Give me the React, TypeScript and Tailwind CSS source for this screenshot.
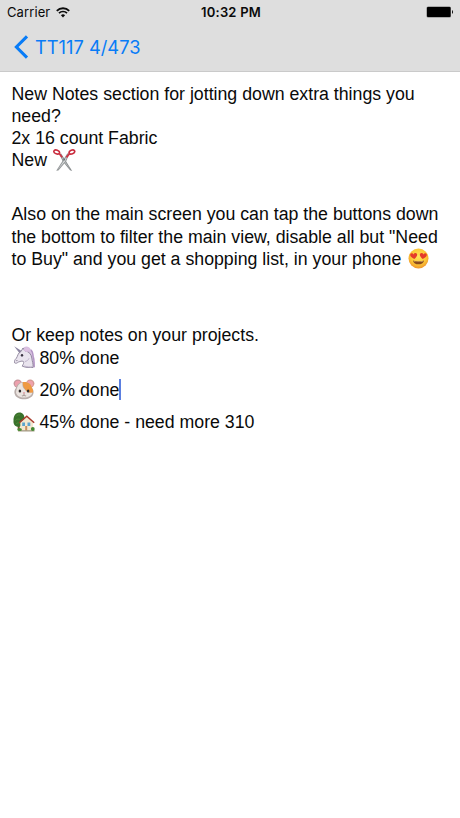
import type { ReactNode } from 'react'

function WifiIcon() {
  return (
    <svg width="14" height="11" viewBox="0 0 14 11" fill="none" className="ml-[6px]">
      <path d="M0.800 3.800a8.800 8.800 0 0 1 12.400 0" stroke="#0a0a0a" strokeWidth="1.900" />
      <path d="M3 6.200a5.600 5.600 0 0 1 8 0" stroke="#0a0a0a" strokeWidth="1.700" />
      <path d="M4.900 8.200a3 3 0 0 1 4.200 0L7 10.400z" fill="#0a0a0a" />
    </svg>
  )
}

function BatteryIcon() {
  return (
    <svg width="28" height="12" viewBox="0 0 28 12">
      <rect x="0.500" y="0.500" width="24.500" height="11" rx="1.600" fill="#777" />
      <rect x="1" y="1" width="23.500" height="10" rx="1" fill="#000" />
      <path d="M26 4.100c1.400.5 1.400 3.300 0 3.800z" fill="#111" />
    </svg>
  )
}

function BackIcon() {
  return (
    <svg width="15" height="24" viewBox="0 0 15 24" fill="none">
      <path d="M13 1.400 2.400 12 13 22.600" stroke="#087cf7" strokeWidth="3.100" />
    </svg>
  )
}

function Scissors() {
  return (
    <svg width="23" height="23" viewBox="0 0 23 23" className="ml-px shrink-0">
      <path d="M6.400 5.200 8.100 4.400 19.200 22 17 21.300 9.800 12.400z" fill="#85898b" />
      <path d="m7.200 5.200 10.300 15.600L10.600 12z" fill="#cfd3d3" />
      <path d="M16.200 5.200 14.400 4.300 3.200 21.800 5.400 21.400 13.100 12.500z" fill="#94989a" />
      <path d="M15.400 5.300 4.700 20.700 12 12.200z" fill="#dfe2e2" />
      <circle cx="11.300" cy="10.600" r="0.900" fill="#6a6e70" />
      <ellipse cx="3.700" cy="3" rx="2.900" ry="1.900" transform="rotate(18 3.700 3)" fill="none" stroke="#c92a3c" strokeWidth="1.600" />
      <ellipse cx="18.900" cy="3" rx="2.900" ry="1.900" transform="rotate(-22 18.900 3)" fill="none" stroke="#c92a3c" strokeWidth="1.600" />
      <path d="M6 4.200 9.100 8.200M16.700 4.400 13.400 8.400" stroke="#cf3746" strokeWidth="1.800" />
    </svg>
  )
}

function HeartEyes() {
  return (
    <svg width="21" height="21" viewBox="0 0 21 21" className="ml-[2px] shrink-0">
      <defs>
        <radialGradient id="face" cx="0.5" cy="0.4" r="0.6">
          <stop offset="0" stopColor="#ffe45c" />
          <stop offset="0.65" stopColor="#fcc637" />
          <stop offset="1" stopColor="#ee942b" />
        </radialGradient>
      </defs>
      <circle cx="10.500" cy="10.500" r="10" fill="url(#face)" />
      <path d="M6.300 11C3.400 9.600 1.600 8 2.300 6.200c.6-1.500 2.500-1.300 3.300.2.6-1.600 2.500-1.900 3.300-.6.9 1.600-.5 3.600-2.600 5.200z" fill="#e53a2c" />
      <path d="M14.700 11c2.900-1.400 4.700-3 4-4.800-.6-1.500-2.500-1.300-3.300.2-.6-1.600-2.500-1.900-3.300-.6-.9 1.600.5 3.600 2.600 5.200z" fill="#e53a2c" />
      <path d="M5 12.400c3.500 1.200 7.500 1.200 11 0-.5 5.200-10.500 5.200-11 0z" fill="#8a4a1d" />
      <path d="M5.800 13c3 .9 6.400.9 9.400 0-.5 1.200-8.900 1.200-9.400 0z" fill="#f9dfa8" />
    </svg>
  )
}

function Unicorn() {
  return (
    <svg width="22" height="22" viewBox="0 0 22 22" className="-mt-[2px]">
      <path d="M8 4C9.500-.5 15-.3 16.500 3c3.200 1.700 3 4.500 3.300 7 1.200 2.500.7 4.500 1.200 7v4.500h-7L13 10z" fill="#d6bfdf" />
      <path d="M17 4c2.500 3 1.500 5 2.300 7.500 1 2.500.5 6 1 9.500" fill="none" stroke="#b193c3" strokeWidth="1.200" />
      <path d="m.2.300 7.800 5-2.500 2z" fill="#8d86a2" />
      <path d="M7 5.500 9 2l2 3c4.200.4 6.300 3.500 6.800 7 .3 3.400 1.700 5.500 1.200 9.500-3 .4-7 .2-10.700-1.300.9-2.400 2-3.200 1-4.800-1.700-.8-3 .2-4.600.5-1.700 1-2.500 2-4.100.9C0 15.700.7 13.700 2.300 12.300 3.900 10.200 3.600 7 7 5.500z" fill="#e9e4ee" stroke="#8b8198" strokeWidth="0.900" />
      <path d="M10.900 15.500c2-.3 3.600-1.600 4.100-3.200M10 20c3 1 6 1 8 .8" fill="none" stroke="#b9aec6" strokeWidth="0.900" />
      <path d="M9.500 4.200c2-3.200 4.500-3.200 6.500-1.200-.5 1.700-2 3-4 3z" fill="#dcc0e2" />
      <ellipse cx="8" cy="9.300" rx="1.200" ry="1.400" fill="#3a3442" />
      <circle cx="2.900" cy="14.600" r="0.600" fill="#776b80" />
    </svg>
  )
}

function Hamster() {
  return (
    <svg width="22" height="21" viewBox="0 0 22 21" className="-mt-px">
      <circle cx="4.800" cy="4.600" r="4.200" fill="#c4969b" />
      <circle cx="5" cy="4.900" r="3.100" fill="#eda0ad" />
      <circle cx="17.200" cy="4.600" r="4.200" fill="#d59a94" />
      <circle cx="17" cy="4.900" r="3.100" fill="#f0a2ab" />
      <path d="M11 3c4.600 0 7.300 2.600 8 6 1.500 1.500 2 3.800 1.400 5.700-.8 3.600-5 5.500-9.400 5.500s-8.600-1.900-9.400-5.500C1 12.800 1.500 10.500 3 9c.7-3.400 3.400-6 8-6z" fill="#b9aeab" />
      <path d="M11 3c4.600 0 7.300 2.600 8 6 1.200 1.500 1.200 3 .9 4.500-3.200 1-5.700 0-7.700-3C11 8 9.500 7 9.500 3.200z" fill="#ef9a43" />
      <path d="M9.500 3.200c-.2 5 .5 5.500 2.300 7.300 1.500 2.500 4 3.500 7.400 3.300-.4 3-4 4.800-8.200 4.800S3.500 16.500 3 13.500C3.700 9 4.500 5 9.500 3.200z" fill="#ebe4e0" />
      <ellipse cx="6.900" cy="12" rx="1.300" ry="1.600" fill="#302b2b" />
      <ellipse cx="15.100" cy="12" rx="1.300" ry="1.600" fill="#302b2b" />
      <path d="M9.800 13.500h2.400L11 14.900z" fill="#d87580" />
      <path d="M11 14.800v1.400M8.900 16.700c.9.400 1.700.1 2.100-.7.400.8 1.200 1.100 2.100.7" fill="none" stroke="#8f7c79" strokeWidth="0.800" />
    </svg>
  )
}

function HouseGarden() {
  return (
    <svg width="22" height="20" viewBox="0 0 22 20" className="mt-px">
      <path d="M4.700 11h2v6.500h-2z" fill="#76502c" />
      <path d="M6 .5C9.500.2 11.500 3 11.500 6c.8 4-1.700 8.500-5.500 8.700C2 15 .1 12 .5 8.700.2 4.500 2.500.7 6 .5z" fill="#39722b" />
      <path d="M3 4.500c1-1.500 2.500-2 4-1.500M2.400 8.500c1.300-1.700 3-1.500 4.500-1.200M3 12c1-1.300 2.400-1.300 3.700-1" fill="none" stroke="#518b38" strokeWidth="1" />
      <path d="M7.300 10.300 13.800 4.500l6.200 5.800v8.400H7.300z" fill="#f4e8cf" />
      <path d="m6.300 10.800 7.500-6.600 7.400 6.600" fill="none" stroke="#a83a2c" strokeWidth="1.500" />
      <path d="M9.200 10.500H12v3.500H9.200zM14.500 10.500h2.800v3.500h-2.800z" fill="#5ca4cd" />
      <path d="M12.200 14h2v4.700h-2z" fill="#c98d5c" />
      <path d="M5 18.200h16.500v1.300H5z" fill="#a49a84" />
      <ellipse cx="6.600" cy="17.500" rx="2.300" ry="1.600" fill="#4b8b32" />
      <ellipse cx="19.800" cy="17" rx="1.900" ry="2" fill="#438833" />
    </svg>
  )
}

function Line({ children }: { children?: ReactNode }) {
  return <div className="flex h-[22.200px] items-center whitespace-pre">{children}</div>
}

export default function App() {
  return (
    <div className="flex h-[818px] w-[460px] flex-col overflow-hidden bg-white">
      <header className="h-[72px] border-b border-[#cacaca] bg-[#dedede] text-[#0a0a0a]">
        <div className="grid h-6 grid-cols-3 items-center pl-[7px] pr-[6px] font-[Inter,sans-serif] text-[13px]">
          <div className="flex items-center">
            <span className="pt-px tracking-[0.100px]">Carrier</span>
            <WifiIcon />
          </div>
          <span className="pl-px pt-px text-center font-semibold tracking-[0.200px]">10:32 PM</span>
          <div className="flex justify-end">
            <BatteryIcon />
          </div>
        </div>
        <button className="flex h-[46px] items-center gap-[6px] pl-[14px] font-[Inter,sans-serif] text-[18.300px] text-[#087cf7]">
          <BackIcon />
          <span className="pt-px">TT117 4/473</span>
        </button>
      </header>

      <main className="flex flex-col pl-[11.500px] pr-3 pt-[10.500px] font-['Liberation_Sans',Arial,sans-serif] text-[17.740px] leading-[22px] text-[#0a0a0a]">
        <Line>New Notes section for jotting down extra things you</Line>
        <Line>need?</Line>
        <Line>2x 16 count Fabric</Line>
        <Line>
          {'New '}
          <Scissors />
        </Line>

        <div className="mt-8">
          <Line>Also on the main screen you can tap the buttons down</Line>
          <Line>the bottom to filter the main view, disable all but "Need</Line>
          <Line>
            {'to Buy" and you get a shopping list, in your phone '}
            <HeartEyes />
          </Line>
        </div>

        <div className="mt-[54.500px]">
          <Line>Or keep notes on your projects.</Line>
          <Line>
            <span className="w-7 pl-[2.500px]"><Unicorn /></span>80% done
          </Line>
          <div className="mt-[10px]">
            <Line>
              <span className="w-7 pl-[1.500px]"><Hamster /></span>20% done
              <span className="h-[21px] w-[2px] bg-[#5b7fe0]" />
            </Line>
          </div>
          <div className="mt-[10px]">
            <Line>
              <span className="w-7 pl-[1.500px]"><HouseGarden /></span>45% done - need more 310
            </Line>
          </div>
        </div>
      </main>
    </div>
  )
}
